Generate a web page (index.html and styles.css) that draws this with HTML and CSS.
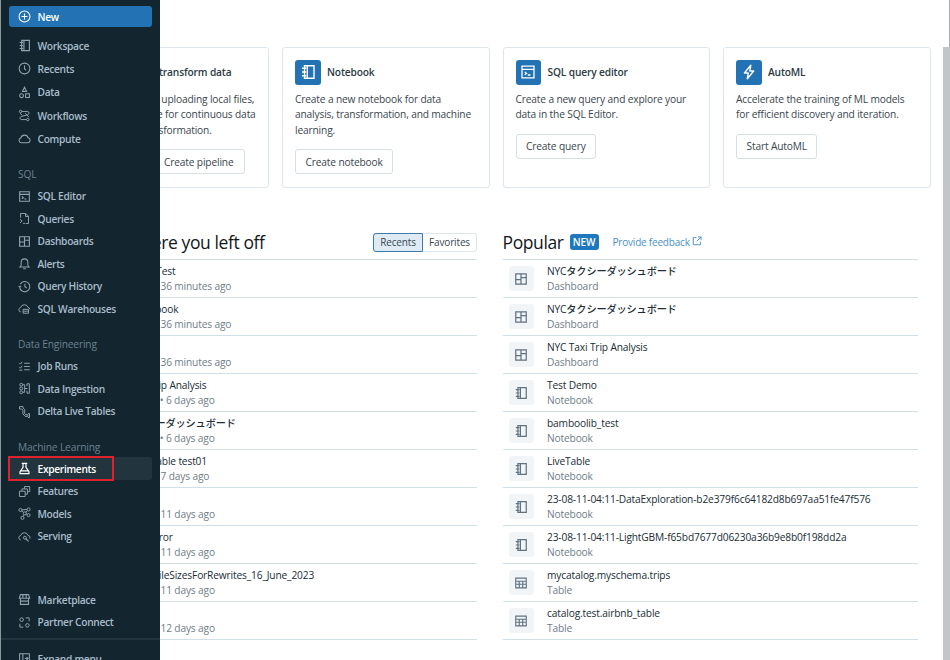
FILE: index.html
```html
<!DOCTYPE html>
<html lang="en">
<head>
<meta charset="utf-8">
<title>Databricks</title>
<link rel="stylesheet" href="styles.css">
</head>
<body>
<svg class="defs" width="0" height="0">
  <symbol id="i-notebook" viewBox="0 0 16 16"><path d="M4.500 1.750h9.500v12.500H4.500zM7.300 1.750v12.500M2 4.250h4.200M2 8h4.200M2 11.750h4.200" fill="none" stroke="currentColor" stroke-width="1.400"/></symbol>
  <symbol id="i-clock" viewBox="0 0 16 16"><circle cx="8" cy="8" r="6.600" fill="none" stroke="currentColor" stroke-width="1.300"/><path d="M8 4.200V8.600L10.200 10" fill="none" stroke="currentColor" stroke-width="1.300"/></symbol>
  <symbol id="i-data" viewBox="0 0 16 16"><path d="M8 1.500 10.600 6.600H5.400zM9.400 9.600h4.600v4.600H9.400z" fill="none" stroke="currentColor" stroke-width="1.300"/><circle cx="4.400" cy="11.900" r="2.400" fill="none" stroke="currentColor" stroke-width="1.300"/></symbol>
  <symbol id="i-flow" viewBox="0 0 16 16"><path d="M4.500 3h7a2 2 0 0 1 2 2c0 1.400-1 2-2.200 2.300L4.700 9C3 9.500 2.500 10.300 2.500 11.300c0 1 .8 1.700 2 1.700h5.500M2.500 5.200 5.200 7.800M9 5.200 13.500 10" fill="none" stroke="currentColor" stroke-width="1.200"/><circle cx="3.200" cy="3" r="1.500" fill="none" stroke="currentColor" stroke-width="1.200"/><circle cx="12" cy="13" r="1.500" fill="none" stroke="currentColor" stroke-width="1.200"/></symbol>
  <symbol id="i-cloud" viewBox="0 0 16 16"><path d="M4 13.200a3 3 0 0 1-.5-5.900 4.700 4.700 0 0 1 9-.2 3.100 3.100 0 0 1-.3 6.100z" fill="none" stroke="currentColor" stroke-width="1.300"/></symbol>
  <symbol id="i-editor" viewBox="0 0 16 16"><path d="M2 2.200h12v11.600H2zM2 5.400h12M4.800 8l1.800 1.400-1.800 1.400M7.800 11h2.600" fill="none" stroke="currentColor" stroke-width="1.300"/></symbol>
  <symbol id="i-queries" viewBox="0 0 16 16"><path d="M3.200 7V1.800h6.300l3.400 3.400v9H9.500M9.200 1.800v3.700h3.700M2.500 9l2.600 2.200-2.600 2.200M6.300 14h2.400" fill="none" stroke="currentColor" stroke-width="1.200"/></symbol>
  <symbol id="i-dash" viewBox="0 0 16 16"><path d="M2 2.200h12v11.600H2zM8 2.200v11.600M2 8.600h6M8 6.400h6" fill="none" stroke="currentColor" stroke-width="1.400"/></symbol>
  <symbol id="i-bell" viewBox="0 0 16 16"><path d="M2.500 12.200c1-.8 1.400-1.700 1.400-3V6.400a4.100 4.100 0 0 1 8.200 0v2.800c0 1.300.4 2.200 1.400 3zM6.400 14.500h3.200" fill="none" stroke="currentColor" stroke-width="1.300"/></symbol>
  <symbol id="i-history" viewBox="0 0 16 16"><path d="M2.700 5.200A6.300 6.300 0 1 1 2 8.800M.8 7.200l1.500 1.500 1.600-1.400M8.500 4.500v3.900l2.300 1.400" fill="none" stroke="currentColor" stroke-width="1.300"/></symbol>
  <symbol id="i-ware" viewBox="0 0 16 16"><path d="M3.400 12.300A2.800 2.800 0 0 1 3.300 6.800a4.700 4.700 0 0 1 9 -.2 3 3 0 0 1 2.400 2.200" fill="none" stroke="currentColor" stroke-width="1.200"/><path d="M6.300 9h6.700v4.800H6.300zM6.300 11.300h6.700" fill="none" stroke="currentColor" stroke-width="1.200"/></symbol>
  <symbol id="i-jobs" viewBox="0 0 16 16"><path d="M1.500 3.500 3 5 5.200 2.200M1.500 8.700 3 10 5.200 7.200M7.500 4h7M7.500 8h7M7.500 12h7M1.500 12.500h4" fill="none" stroke="currentColor" stroke-width="1.200"/></symbol>
  <symbol id="i-ingest" viewBox="0 0 16 16"><path d="M11 2.200h3v11.600h-3M11 2.200v3M11 10.800v3" fill="none" stroke="currentColor" stroke-width="1.200"/><circle cx="4" cy="3.400" r="1.800" fill="none" stroke="currentColor" stroke-width="1.200"/><circle cx="4" cy="8" r="1.800" fill="none" stroke="currentColor" stroke-width="1.200"/><circle cx="4" cy="12.600" r="1.800" fill="none" stroke="currentColor" stroke-width="1.200"/><path d="M5.800 3.400h2.400v9.200H5.800M8.200 8h3.500" fill="none" stroke="currentColor" stroke-width="1.200"/></symbol>
  <symbol id="i-delta" viewBox="0 0 16 16"><path d="M1.800 2h4.400v1.800L8.300 5.600v5.200l1.200 1.200h2.700v2H9l-3-3V6.400L4.500 4.900H1.800z" fill="none" stroke="currentColor" stroke-width="1.200"/><path d="M12.200 10.600h2v4.800h-2" fill="none" stroke="currentColor" stroke-width="1.200"/></symbol>
  <symbol id="i-flask" viewBox="0 0 16 16"><path d="M4.600 1.800h6.800M6.200 1.800v4.800L2.500 11.800v2.400h11v-2.400L9.800 6.600V1.800M3 10.900h10" fill="none" stroke="currentColor" stroke-width="1.500"/></symbol>
  <symbol id="i-features" viewBox="0 0 16 16"><path d="M1.800 7.600h7v6.600h-7zM4.800 7.500V4.800h6.800v6.500H9M8 4.500V1.900h6.400v6.300h-2.600" fill="none" stroke="currentColor" stroke-width="1.200"/></symbol>
  <symbol id="i-models" viewBox="0 0 16 16"><g fill="none" stroke="currentColor" stroke-width="1.200"><circle cx="3" cy="3.600" r="1.900"/><circle cx="13" cy="3" r="1.900"/><circle cx="8.400" cy="7.800" r="1.900"/><circle cx="13" cy="10" r="1.900"/><circle cx="5.500" cy="13.400" r="1.900"/><path d="M4.900 3.500 11.100 3M4.400 5 7 6.500M11.500 4.400 9.800 6.400M10.200 8.600 11.300 9.200M7.600 9.500 6.200 11.700"/></g></symbol>
  <symbol id="i-serving" viewBox="0 0 16 16"><path d="M3.300 12.300A2.800 2.800 0 0 1 3.300 6.800a4.700 4.700 0 0 1 9-.2 3 3 0 0 1 2.300 4" fill="none" stroke="currentColor" stroke-width="1.200"/><circle cx="8.500" cy="9.500" r="1.800" fill="none" stroke="currentColor" stroke-width="1.200"/><path d="M9.800 10.800 13 14" fill="none" stroke="currentColor" stroke-width="1.400"/></symbol>
  <symbol id="i-market" viewBox="0 0 16 16"><path d="M3 2h10l1.400 4.500H1.600zM3 6.500v7.500h10V6.500M3 10h10M6.200 2 5.800 6.500M9.800 2l.4 4.500" fill="none" stroke="currentColor" stroke-width="1.300"/></symbol>
  <symbol id="i-partner" viewBox="0 0 16 16"><circle cx="4.500" cy="4.500" r="2.200" fill="none" stroke="currentColor" stroke-width="1.200"/><path d="M9.500 2.300h4.200v4.200M2.300 9.500v4.200h4.200" fill="none" stroke="currentColor" stroke-width="1.200"/><circle cx="11.500" cy="11.500" r="2.200" fill="none" stroke="currentColor" stroke-width="1.200"/></symbol>
  <symbol id="i-expand" viewBox="0 0 16 16"><path d="M2 2.200h12v11.600H2zM6 2.200v11.600M8.500 8h3.500M10.500 6.200 12.300 8l-1.800 1.800" fill="none" stroke="currentColor" stroke-width="1.300"/></symbol>
  <symbol id="i-plus" viewBox="0 0 16 16"><circle cx="8" cy="8" r="6.700" fill="none" stroke="currentColor" stroke-width="1.300"/><path d="M8 4.400v7.200M4.400 8h7.200" fill="none" stroke="currentColor" stroke-width="1.300"/></symbol>
  <symbol id="i-bolt" viewBox="0 0 16 16"><path d="M9.800 1.300 3.400 9h3.900l-1 5.700L12.700 7H8.800z" fill="none" stroke="currentColor" stroke-width="1.400" stroke-linejoin="round"/></symbol>
  <symbol id="i-ext" viewBox="0 0 16 16"><path d="M7 2.500H2v11.500h11.500V9M9.500 1.500h5v5M14.500 1.500 7.500 8.500" fill="none" stroke="currentColor" stroke-width="1.500"/></symbol>
  <symbol id="i-table" viewBox="0 0 16 16"><path d="M2 2.400h12v11.200H2zM2 6h12M2 9.400h12M6 6v7.600M10 6v7.600" fill="none" stroke="currentColor" stroke-width="1.300"/></symbol>
</svg>

<main class="main">
  <section class="cards">
    <article class="card">
      <header class="card-head"><span class="tile"><svg class="tile-icon"><use href="#i-flow"/></svg></span><h3>Ingest and transform data</h3></header>
      <p class="card-text">Ingest raw data by uploading local files,<br>or set up a pipeline for continuous data<br>ingestion and transformation.</p>
      <div class="btn-row"><button class="btn">Upload data</button><button class="btn btn-wide">Create pipeline</button></div>
    </article>
    <article class="card">
      <header class="card-head"><span class="tile"><svg class="tile-icon"><use href="#i-notebook"/></svg></span><h3>Notebook</h3></header>
      <p class="card-text">Create a new notebook for data<br>analysis, transformation, and machine<br>learning.</p>
      <button class="btn">Create notebook</button>
    </article>
    <article class="card">
      <header class="card-head"><span class="tile"><svg class="tile-icon"><use href="#i-editor"/></svg></span><h3>SQL query editor</h3></header>
      <p class="card-text">Create a new query and explore your<br>data in the SQL Editor.</p>
      <button class="btn">Create query</button>
    </article>
    <article class="card">
      <header class="card-head"><span class="tile"><svg class="tile-icon"><use href="#i-bolt"/></svg></span><h3>AutoML</h3></header>
      <p class="card-text">Accelerate the training of ML models<br>for efficient discovery and iteration.</p>
      <button class="btn">Start AutoML</button>
    </article>
  </section>

  <section class="lists">
    <div class="col">
      <header class="col-head">
        <h2 class="title-left">Pick up where you left off</h2>
        <div class="toggle"><span class="toggle-on">Recents</span><span class="toggle-off">Favorites</span></div>
      </header>
      <ul class="rows">
        <li class="row"><span class="row-tile"><svg class="row-icon"><use href="#i-notebook"/></svg></span><div><div class="name">Workbook Test</div><div class="meta">Notebook • 36 minutes ago</div></div></li>
        <li class="row"><span class="row-tile"><svg class="row-icon"><use href="#i-notebook"/></svg></span><div><div class="name">Delta Notebook</div><div class="meta">Notebook • 36 minutes ago</div></div></li>
        <li class="row"><span class="row-tile"><svg class="row-icon"><use href="#i-notebook"/></svg></span><div><div class="name">Test</div><div class="meta">Notebook • 36 minutes ago</div></div></li>
        <li class="row"><span class="row-tile"><svg class="row-icon"><use href="#i-dash"/></svg></span><div><div class="name">NYC Taxi Trip Analysis</div><div class="meta">Dashboard • 6 days ago</div></div></li>
        <li class="row"><span class="row-tile"><svg class="row-icon"><use href="#i-dash"/></svg></span><div><div class="name">NYCタクシーダッシュボード</div><div class="meta">Dashboard • 6 days ago</div></div></li>
        <li class="row"><span class="row-tile"><svg class="row-icon"><use href="#i-notebook"/></svg></span><div><div class="name">Data Live Table test01</div><div class="meta">Notebook • 7 days ago</div></div></li>
        <li class="row"><span class="row-tile"><svg class="row-icon"><use href="#i-notebook"/></svg></span><div><div class="name">Test</div><div class="meta">Notebook • 11 days ago</div></div></li>
        <li class="row"><span class="row-tile"><svg class="row-icon"><use href="#i-notebook"/></svg></span><div><div class="name">Analytics Error</div><div class="meta">Notebook • 11 days ago</div></div></li>
        <li class="row"><span class="row-tile"><svg class="row-icon"><use href="#i-notebook"/></svg></span><div><div class="name">OptimizedFileSizesForRewrites_16_June_2023</div><div class="meta">Notebook • 11 days ago</div></div></li>
        <li class="row"><span class="row-tile"><svg class="row-icon"><use href="#i-notebook"/></svg></span><div><div class="name">Test</div><div class="meta">Notebook • 12 days ago</div></div></li>
      </ul>
    </div>
    <div class="col">
      <header class="col-head col-head-start">
        <h2>Popular</h2>
        <span class="badge">NEW</span>
        <a class="feedback">Provide feedback<svg class="ext"><use href="#i-ext"/></svg></a>
      </header>
      <ul class="rows">
        <li class="row"><span class="row-tile"><svg class="row-icon"><use href="#i-dash"/></svg></span><div><div class="name">NYCタクシーダッシュボード</div><div class="meta">Dashboard</div></div></li>
        <li class="row"><span class="row-tile"><svg class="row-icon"><use href="#i-dash"/></svg></span><div><div class="name">NYCタクシーダッシュボード</div><div class="meta">Dashboard</div></div></li>
        <li class="row"><span class="row-tile"><svg class="row-icon"><use href="#i-dash"/></svg></span><div><div class="name">NYC Taxi Trip Analysis</div><div class="meta">Dashboard</div></div></li>
        <li class="row"><span class="row-tile"><svg class="row-icon"><use href="#i-notebook"/></svg></span><div><div class="name">Test Demo</div><div class="meta">Notebook</div></div></li>
        <li class="row"><span class="row-tile"><svg class="row-icon"><use href="#i-notebook"/></svg></span><div><div class="name">bamboolib_test</div><div class="meta">Notebook</div></div></li>
        <li class="row"><span class="row-tile"><svg class="row-icon"><use href="#i-notebook"/></svg></span><div><div class="name">LiveTable</div><div class="meta">Notebook</div></div></li>
        <li class="row"><span class="row-tile"><svg class="row-icon"><use href="#i-notebook"/></svg></span><div><div class="name">23-08-11-04:11-DataExploration-b2e379f6c64182d8b697aa51fe47f576</div><div class="meta">Notebook</div></div></li>
        <li class="row"><span class="row-tile"><svg class="row-icon"><use href="#i-notebook"/></svg></span><div><div class="name">23-08-11-04:11-LightGBM-f65bd7677d06230a36b9e8b0f198dd2a</div><div class="meta">Notebook</div></div></li>
        <li class="row"><span class="row-tile"><svg class="row-icon"><use href="#i-table"/></svg></span><div><div class="name">mycatalog.myschema.trips</div><div class="meta">Table</div></div></li>
        <li class="row"><span class="row-tile"><svg class="row-icon"><use href="#i-table"/></svg></span><div><div class="name">catalog.test.airbnb_table</div><div class="meta">Table</div></div></li>
      </ul>
    </div>
  </section>
</main>

<div class="scrollbar"></div>

<nav class="side">
  <a class="new"><svg class="nav-icon new-icon"><use href="#i-plus"/></svg>New</a>
  <div class="group group-top">
    <a class="item"><svg class="nav-icon"><use href="#i-notebook"/></svg>Workspace</a>
    <a class="item"><svg class="nav-icon"><use href="#i-clock"/></svg>Recents</a>
    <a class="item"><svg class="nav-icon"><use href="#i-data"/></svg>Data</a>
    <a class="item"><svg class="nav-icon"><use href="#i-flow"/></svg>Workflows</a>
    <a class="item"><svg class="nav-icon"><use href="#i-cloud"/></svg>Compute</a>
  </div>
  <div class="label label-sql">SQL</div>
  <div class="group">
    <a class="item"><svg class="nav-icon"><use href="#i-editor"/></svg>SQL Editor</a>
    <a class="item"><svg class="nav-icon"><use href="#i-queries"/></svg>Queries</a>
    <a class="item"><svg class="nav-icon"><use href="#i-dash"/></svg>Dashboards</a>
    <a class="item"><svg class="nav-icon"><use href="#i-bell"/></svg>Alerts</a>
    <a class="item"><svg class="nav-icon"><use href="#i-history"/></svg>Query History</a>
    <a class="item"><svg class="nav-icon"><use href="#i-ware"/></svg>SQL Warehouses</a>
  </div>
  <div class="label">Data Engineering</div>
  <div class="group">
    <a class="item"><svg class="nav-icon"><use href="#i-jobs"/></svg>Job Runs</a>
    <a class="item"><svg class="nav-icon"><use href="#i-ingest"/></svg>Data Ingestion</a>
    <a class="item"><svg class="nav-icon"><use href="#i-delta"/></svg>Delta Live Tables</a>
  </div>
  <div class="label label-ml">Machine Learning</div>
  <div class="group">
    <a class="item item-active"><svg class="nav-icon"><use href="#i-flask"/></svg>Experiments<span class="redbox"></span></a>
    <a class="item"><svg class="nav-icon"><use href="#i-features"/></svg>Features</a>
    <a class="item"><svg class="nav-icon"><use href="#i-models"/></svg>Models</a>
    <a class="item"><svg class="nav-icon"><use href="#i-serving"/></svg>Serving</a>
  </div>
  <div class="group group-bottom">
    <a class="item"><svg class="nav-icon"><use href="#i-market"/></svg>Marketplace</a>
    <a class="item"><svg class="nav-icon"><use href="#i-partner"/></svg>Partner Connect</a>
  </div>
  <div class="foot"><a class="item"><svg class="nav-icon"><use href="#i-expand"/></svg>Expand menu</a></div>
</nav>
</body>
</html>
```

FILE: styles.css
```css
* { box-sizing: border-box; }
html, body { margin: 0; height: 660px; overflow: hidden; background: #fff; }
body { font-family: "Open Sans", "Noto Sans CJK JP", sans-serif; font-size: 10.2px; letter-spacing: -.15px; color: #11171c; position: relative; }
.defs { position: absolute; }
h2, h3, p, ul { margin: 0; padding: 0; }
ul { list-style: none; }

.main { padding: 47px 0 0 61.5px; }
.cards { display: grid; grid-template-columns: repeat(4, 207.5px); gap: 13px; }
.card { height: 141px; border: 1px solid #dde5ee; border-radius: 3px; padding: 11.5px 12px; display: flex; flex-direction: column; align-items: flex-start; }
.card-head { display: flex; align-items: center; gap: 6.5px; height: 25px; }
.card-head h3 { font-size: 10.2px; font-weight: 600; color: #2b3a44; white-space: nowrap; }
.tile { width: 25.5px; height: 25px; border-radius: 3px; background: #2272b4; color: #fff; display: flex; align-items: center; justify-content: center; }
.tile-icon { width: 16px; height: 16px; }
.card-text { margin-top: 7px; line-height: 15.5px; color: #39454e; white-space: nowrap; }
.btn { margin-top: 11px; height: 25px; padding: 0 9.5px; background: #fff; border: 1px solid #d6dfe8; border-radius: 3px; font: inherit; letter-spacing: inherit; color: #39454e; }
.btn-row { display: flex; gap: 1px; }
.btn-row .btn-wide { padding: 0 10px; }

.lists { display: grid; grid-template-columns: 415.5px 415.5px; gap: 25.5px; margin-top: 39px; }
.col-head { height: 30px; display: flex; align-items: center; justify-content: space-between; }
.col-head-start { justify-content: flex-start; }
.col-head h2 { font-size: 17.5px; font-weight: 400; letter-spacing: -.4px; white-space: nowrap; }
.title-left { margin-left: 7px; }
.toggle { display: flex; height: 19px; line-height: 17px; font-size: 10px; color: #39454e; }
.toggle-on { width: 50px; text-align: center; background: #deebf5; border: 1px solid #3f7ba8; border-radius: 3px 0 0 3px; }
.toggle-off { width: 54px; text-align: center; border: 1px solid #dde5ee; border-left: 0; border-radius: 0 3px 3px 0; }
.badge { margin-left: 6px; width: 29px; height: 16px; line-height: 16px; text-align: center; background: #1e78bd; color: #fff; font-size: 10px; font-weight: 600; border-radius: 3px; }
.feedback { margin-left: 14px; color: #4c8fc5; font-size: 10px; letter-spacing: -.2px; display: flex; align-items: center; gap: 2px; }
.ext { width: 10px; height: 10px; margin-bottom: 2px; }

.rows { border-top: 1px solid #d1dfe9; margin-top: 2px; }
.row { height: 38px; border-bottom: 1px solid #d1dfe9; display: flex; align-items: center; padding-left: 6px; gap: 13.5px; white-space: nowrap; }
.row-tile { width: 25px; height: 25px; border-radius: 3px; background: #f2f5f7; color: #5f7281; display: flex; align-items: center; justify-content: center; flex: none; }
.row-icon { width: 14px; height: 14px; }
.name { line-height: 15px; color: #202c35; font-weight: 500; }
.meta { line-height: 15px; color: #6f7d88; }

.scrollbar { position: absolute; right: 0; top: 0; bottom: 0; width: 1px; background: #a9adb0; }
.scrollbar::before { content: ""; position: absolute; right: 0; top: 47px; bottom: 0; width: 7px; background: #c1c6c9; }

.side { position: absolute; left: 0; top: 0; bottom: 0; width: 160px; background: #13252e; border-left: 1px solid #8d9699; color: #a9bccb; padding: 6px 8px 0 8px; display: flex; flex-direction: column; font-weight: 600; letter-spacing: -.3px; overflow: hidden; }
.side a { display: flex; align-items: center; white-space: nowrap; }
.new { height: 21px; flex: none; background: #2272b4; color: #fff; border-radius: 3px; padding-left: 9px; }
.nav-icon { width: 13px; height: 13px; margin-right: 6.5px; flex: none; color: #8fa3b2; }
.new-icon { color: #fff; }
.group-top { margin-top: 7px; }
.group-top .item { height: 23.3px; }
.item { height: 22.5px; padding-left: 9px; position: relative; }
.item-active { background: #22353f; color: #fff; border-radius: 3px; }
.item-active .nav-icon { color: #fff; }
.redbox { position: absolute; left: -1px; top: -1px; width: 106px; height: 25px; border: 2px solid #e0202c; }
.label { font-weight: 400; letter-spacing: -.15px; color: #6c8291; padding-left: 9px; height: 15px; line-height: 15px; margin-top: 17.6px; margin-bottom: 2.4px; }
.label-sql { margin-top: 17px; }
.label-ml { margin-top: 18px; margin-bottom: 2px; }
.group-bottom { margin-top: 41px; }
.foot { margin: 5px -8px 0 -8px; padding: 7px 8px 0 8px; border-top: 2px solid #22353f; }
```
